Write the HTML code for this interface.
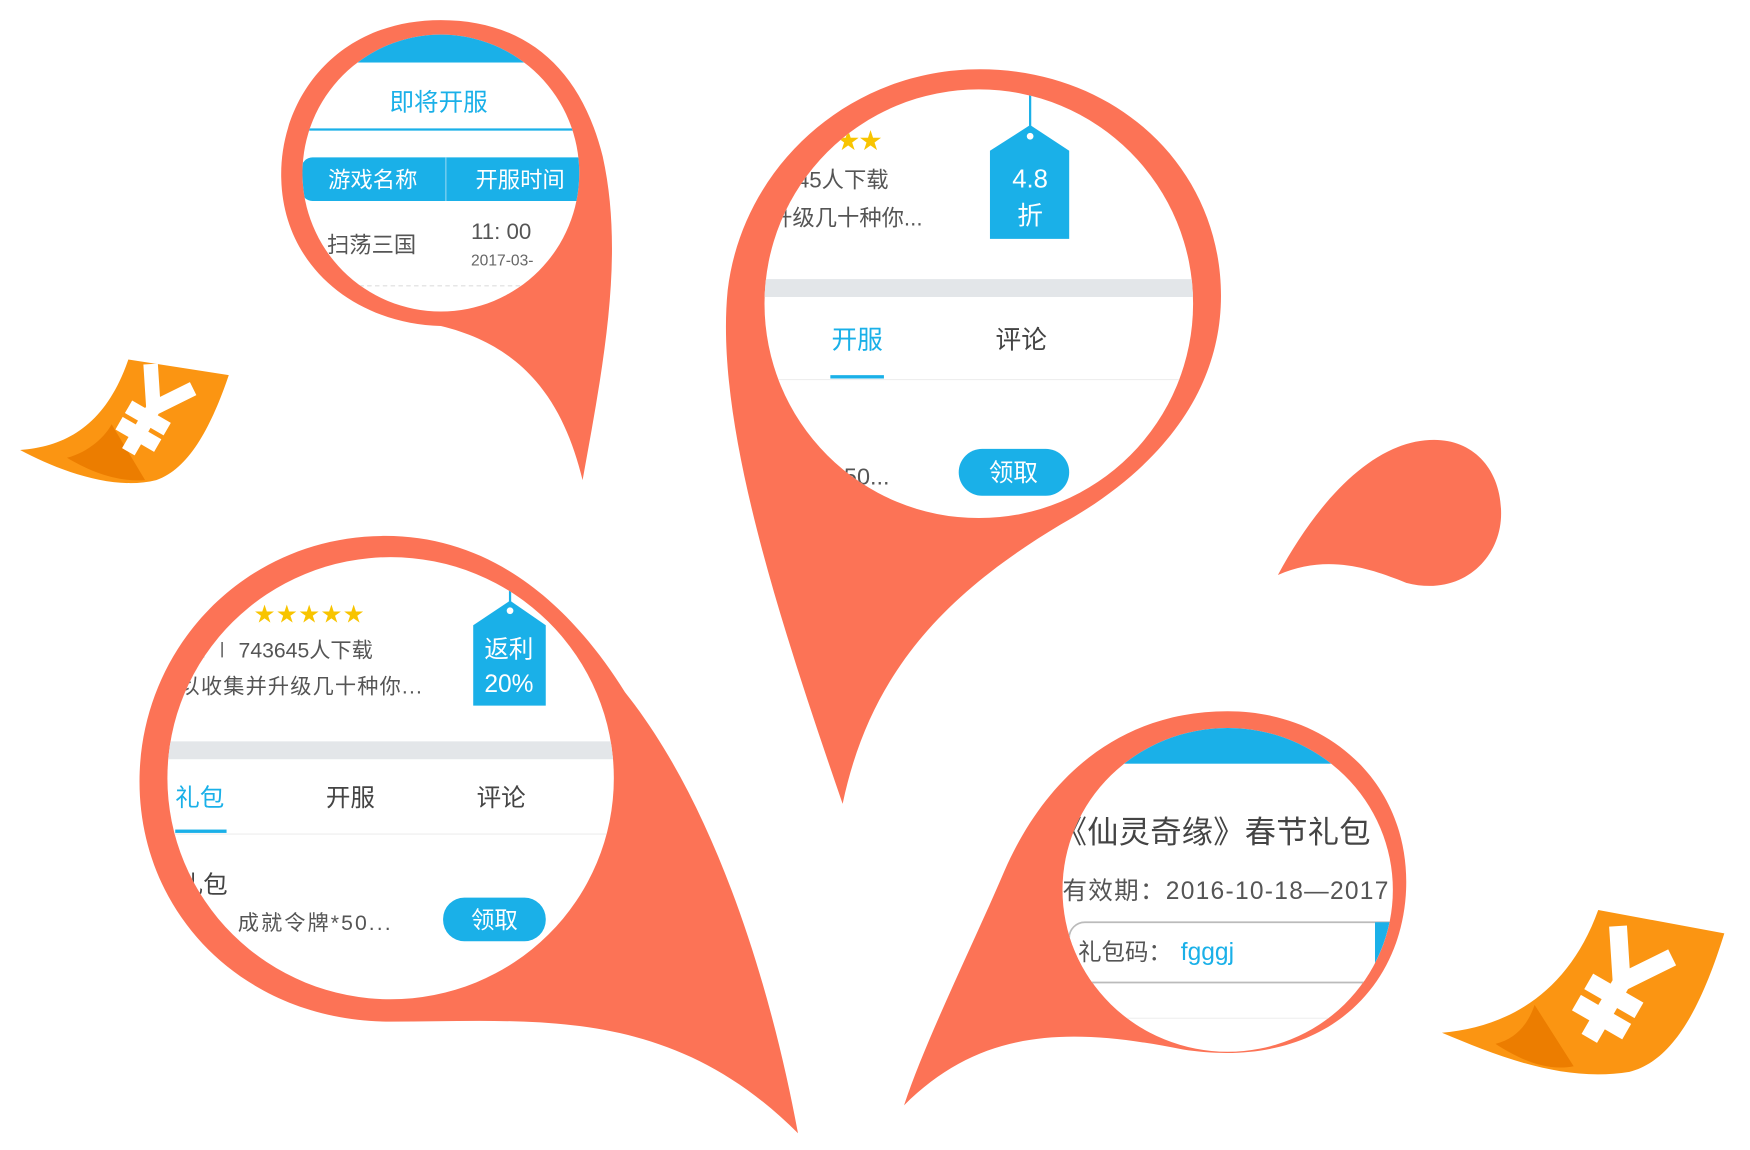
<!DOCTYPE html>
<html><head><meta charset="utf-8"><style>
html,body{margin:0;padding:0;background:#fff;width:1750px;height:1150px;overflow:hidden}
svg{display:block}
text{font-family:"Liberation Sans","Noto Sans CJK SC",sans-serif}
</style></head><body>
<svg width="1750" height="1150" viewBox="0 0 1568 1030" preserveAspectRatio="none">
<defs>
<clipPath id="c1"><circle cx="395" cy="155" r="124"/></clipPath>
<clipPath id="c2"><circle cx="877" cy="272" r="192"/></clipPath>
<clipPath id="c3"><ellipse cx="350" cy="697" rx="200" ry="198"/></clipPath>
<clipPath id="c4"><ellipse cx="1100" cy="797" rx="148" ry="145"/></clipPath>
</defs>
<g fill="#fc7356">
<path d="M395 18 C300 18 250 90 252 160 C254 240 320 290 395 292 C470 310 505 360 522 430 C540 330 560 230 540 140 C520 60 470 18 395 18Z"/>
<path d="M878 62 C760 62 665 150 652 260 C640 380 700 560 755 720 C780 600 850 530 950 470 C1040 420 1094 350 1094 265 C1094 150 1000 62 878 62Z"/>
<path d="M345 480 C220 480 125 580 125 700 C125 820 220 915 350 915 C480 915 600 900 715 1015 C690 880 640 720 560 620 C510 540 440 480 345 480Z"/>
<path d="M1100 637 C1000 637 935 700 900 780 C870 850 830 930 810 990 C880 920 960 920 1060 940 C1190 960 1260 880 1260 790 C1260 700 1190 637 1100 637Z"/>
<path d="M1285 394 C1230 394 1180 450 1145 515 C1190 495 1230 510 1260 522 C1310 535 1345 500 1345 460 C1345 420 1320 394 1285 394Z"/>
</g>
<circle cx="395" cy="155" r="124" fill="#fff"/>
<g clip-path="url(#c1)">
<rect x="250" y="20" width="300" height="36" fill="#1ab0e8"/>
<text x="393" y="99" font-size="22" fill="#1ab0e8" text-anchor="middle">即将开服</text>
<rect x="270" y="115" width="260" height="2" fill="#1ab0e8"/>
<rect x="270" y="141" width="260" height="39" rx="10" fill="#1ab0e8"/>
<rect x="399" y="141" width="1" height="39" fill="#8fd6f2"/>
<text x="334" y="168" font-size="20" fill="#fff" text-anchor="middle">游戏名称</text>
<text x="466" y="168" font-size="20" fill="#fff" text-anchor="middle">开服时间</text>
<text x="293" y="226" font-size="20" fill="#555">扫荡三国</text>
<text x="422" y="214" font-size="20" fill="#555">11: 00</text>
<text x="422" y="238" font-size="14" fill="#666">2017-03-</text>
<line x1="280" y1="256" x2="520" y2="256" stroke="#ddd" stroke-dasharray="4 3"/>
</g>
<circle cx="877" cy="272" r="192" fill="#fff"/>
<g clip-path="url(#c2)">
<text x="750" y="133" font-size="20" fill="#f8c400">★★</text>
<text x="714" y="168" font-size="20" fill="#555">45人下载</text>
<text x="690" y="202" font-size="20" fill="#555">升级几十种你...</text>
<line x1="923" y1="85" x2="923" y2="115" stroke="#1ab0e8" stroke-width="2"/>
<path d="M887 135 L923 112 L958 135 L958 214 L887 214Z" fill="#1ab0e8"/>
<circle cx="923" cy="122" r="3" fill="#fff"/>
<text x="923" y="168" font-size="23" fill="#fff" text-anchor="middle">4.8</text>
<text x="923" y="201" font-size="23" fill="#fff" text-anchor="middle">折</text>
<rect x="680" y="250" width="400" height="16" fill="#e3e6e9"/>
<text x="768" y="312" font-size="23" fill="#1ab0e8" text-anchor="middle">开服</text>
<text x="915" y="312" font-size="23" fill="#444" text-anchor="middle">评论</text>
<rect x="744" y="336" width="48" height="3" fill="#1ab0e8"/>
<line x1="680" y1="340" x2="1080" y2="340" stroke="#eee"/>
<text x="748" y="434" font-size="21" fill="#555">*50...</text>
<rect x="859" y="402" width="99" height="42" rx="21" fill="#1ab0e8"/>
<text x="908" y="431" font-size="22" fill="#fff" text-anchor="middle">领取</text>
</g>
<ellipse cx="350" cy="697" rx="200" ry="198" fill="#fff"/>
<g clip-path="url(#c3)">
<text x="228" y="556" font-size="18" fill="#f8c400" letter-spacing="2">★★★★★</text>
<text x="180" y="589" font-size="19" fill="#555">i ∣ 743645人下载</text>
<text x="160" y="621" font-size="19" fill="#555" textLength="218">以收集并升级几十种你...</text>
<line x1="457" y1="525" x2="457" y2="545" stroke="#1ab0e8" stroke-width="2"/>
<path d="M424 560 L457 538 L489 560 L489 632 L424 632Z" fill="#1ab0e8"/>
<circle cx="457" cy="547" r="3" fill="#fff"/>
<text x="456" y="589" font-size="22" fill="#fff" text-anchor="middle">返利</text>
<text x="456" y="620" font-size="22" fill="#fff" text-anchor="middle">20%</text>
<rect x="140" y="664" width="420" height="16" fill="#e3e6e9"/>
<text x="179" y="722" font-size="22" fill="#1ab0e8" text-anchor="middle">礼包</text>
<text x="314" y="722" font-size="22" fill="#444" text-anchor="middle">开服</text>
<text x="449" y="722" font-size="22" fill="#444" text-anchor="middle">评论</text>
<rect x="157" y="743" width="46" height="3" fill="#1ab0e8"/>
<line x1="140" y1="747" x2="560" y2="747" stroke="#eee"/>
<text x="160" y="800" font-size="22" fill="#444">礼包</text>
<text x="185" y="833" font-size="19" fill="#555" textLength="165">：  成就令牌*50...</text>
<rect x="397" y="804" width="92" height="39" rx="19" fill="#1ab0e8"/>
<text x="443" y="831" font-size="21" fill="#fff" text-anchor="middle">领取</text>
</g>
<ellipse cx="1100" cy="797" rx="148" ry="145" fill="#fff"/>
<g clip-path="url(#c4)">
<rect x="940" y="640" width="320" height="44" fill="#1ab0e8"/>
<text x="946" y="755" font-size="28" fill="#444" textLength="282">《仙灵奇缘》春节礼包</text>
<text x="952" y="805" font-size="22" fill="#555" textLength="292">有效期：2016-10-18—2017</text>
<rect x="958" y="826" width="300" height="54" rx="14" fill="#fff" stroke="#bbb" stroke-width="1.5"/>
<rect x="1232" y="826" width="30" height="40" fill="#1ab0e8"/>
<text x="966" y="860" font-size="21" fill="#555">礼包码：</text>
<text x="1058" y="860" font-size="22" fill="#1ab0e8">fgggj</text>
<line x1="940" y1="912" x2="1260" y2="912" stroke="#eee"/>
</g>
<g>
<path d="M115 322 L205 336 C190 380 170 420 140 430 C100 440 50 420 18 403 C60 400 95 380 115 322Z" fill="#fb9512"/>
<path d="M60 410 C80 405 95 390 100 380 L130 430 C105 432 80 422 60 410Z" fill="#ec7d00"/>
<g transform="translate(135 370) rotate(30)" stroke="#fff" stroke-width="13" fill="none">
<path d="M-22 -38 L0 -5 L22 -38 M0 -5 L0 40 M-20 5 L20 5 M-20 22 L20 22"/>
</g>
<path d="M1432 815 L1545 836 C1525 900 1500 950 1460 960 C1400 970 1340 945 1292 925 C1350 920 1405 890 1432 815Z" fill="#fb9512"/>
<path d="M1340 935 C1360 930 1370 915 1375 900 L1410 955 C1385 960 1360 948 1340 935Z" fill="#ec7d00"/>
<g transform="translate(1450 885) rotate(30)" stroke="#fff" stroke-width="16" fill="none">
<path d="M-28 -48 L0 -6 L28 -48 M0 -6 L0 52 M-26 8 L26 8 M-26 30 L26 30"/>
</g>
</g>
</svg>
</body></html>
